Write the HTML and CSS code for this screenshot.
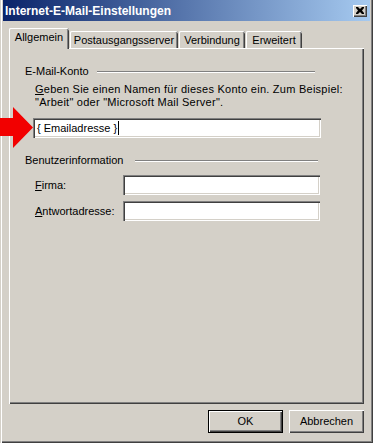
FILE: index.html
```html
<!DOCTYPE html>
<html lang="de">
<head>
<meta charset="utf-8">
<title>Internet-E-Mail-Einstellungen</title>
<link rel="stylesheet" href="styles.css">
</head>
<body>
<div class="window">
  <div class="titlebar">
    <span class="title">Internet-E-Mail-Einstellungen</span>
    <span class="close"><svg width="8" height="7" viewBox="0 0 8 7"><path d="M0 0h2l2 2 2-2h2v1L6 3.5 8 6v1H6L4 5 2 7H0V6l2-2.5L0 1z" fill="#000"/></svg></span>
  </div>
  <div class="tabs">
    <div class="tab tab-active">Allgemein</div>
    <div class="tab tab-out">Postausgangsserver</div>
    <div class="tab tab-conn">Verbindung</div>
    <div class="tab tab-adv">Erweitert</div>
  </div>
  <div class="panel">
    <div class="group-head group-head-mail"><span>E-Mail-Konto</span><span class="rule"></span></div>
    <p class="desc"><u>G</u>eben Sie einen Namen für dieses Konto ein. Zum Beispiel:<br>"Arbeit" oder "Microsoft Mail Server".</p>
    <div class="field field-wide">{ Emailadresse }<span class="caret"></span></div>
    <div class="group-head group-head-user"><span>Benutzerinformation</span><span class="rule rule-wide"></span></div>
    <div class="row row-first"><label class="row-label"><u>F</u>irma:</label><div class="field field-row"></div></div>
    <div class="row row-second"><label class="row-label"><u>A</u>ntwortadresse:</label><div class="field field-row"></div></div>
  </div>
  <div class="buttons">
    <div class="btn btn-default">OK</div>
    <div class="btn">Abbrechen</div>
  </div>
  <svg class="arrow" width="34" height="42" viewBox="0 0 34 42"><polygon points="0,11 13,11 13,0 33,20.5 13,41 13,29 0,29" fill="#f20000"/></svg>
</div>
</body>
</html>
```
FILE: styles.css
```css
* { box-sizing: border-box; }
body {
  margin: 0;
  background: #d4d0c8;
  font-family: "Liberation Sans", Arial, sans-serif;
  font-size: 11px;
  color: #000;
}
.window {
  position: relative;
  width: 373px;
  height: 443px;
  background: #d4d0c8;
  padding: 0 3px 3px 3px;
  box-shadow: inset 1px 0 #d4d0c8, inset 2px 0 #fff, inset -1px -1px #404040, inset -2px -2px #808080;
}
.titlebar {
  height: 21px;
  display: flex;
  align-items: center;
  padding-left: 2px;
  background: linear-gradient(to right, #0a246a, #a6caf0);
}
.title {
  color: #fff;
  font-weight: bold;
  font-size: 12px;
}
.close {
  margin-left: auto;
  margin-right: 3px;
  width: 14px;
  height: 12px;
  background: #d4d0c8;
  display: flex;
  align-items: center;
  justify-content: center;
  box-shadow: inset 1px 1px #fff, inset -1px -1px #404040, inset -2px -2px #808080;
}
.close svg { display: block; }
.tabs {
  display: flex;
  align-items: flex-end;
  margin-top: 7px;
  padding-left: 6px;
  height: 20px;
}
.tab {
  height: 17px;
  line-height: 16px;
  text-align: center;
  margin-left: 1px;
  padding-top: 1px;
  border-radius: 2px 2px 0 0;
  box-shadow: inset 1px 0 #fff, inset 0 1px #fff, inset -1px 0 #404040, inset -2px 0 #808080;
}
.tab-active {
  position: relative;
  z-index: 1;
  margin-left: 0;
  width: 60px;
  height: 21px;
  margin-bottom: -1px;
  padding-top: 0;
  line-height: 19px;
  background: #d4d0c8;
}
.tab-out { width: 108px; margin-left: 1px; }
.tab-conn { width: 66px; }
.tab-adv { width: 56px; }
.panel {
  margin: 0 6px;
  height: 356px;
  padding: 17px 0 0 16px;
  box-shadow: inset 1px 1px #fff, inset -1px -1px #404040, inset -2px -2px #808080;
}
.group-head {
  display: flex;
  align-items: center;
  height: 13px;
  line-height: 13px;
}
.group-head-mail { width: 290px; }
.group-head-user { width: 293px; margin-top: 16px; }
.rule {
  flex: 1;
  margin-left: 8px;
  height: 2px;
  border-top: 1px solid #808080;
  border-bottom: 1px solid #fff;
}
.rule-wide { margin-left: 12px; }
.desc {
  margin: 5px 0 0 10px;
  line-height: 13px;
  letter-spacing: 0.25px;
}
.field {
  height: 20px;
  line-height: 20px;
  padding-left: 4px;
  background: #fff;
  box-shadow: inset 1px 1px #808080, inset 2px 2px #404040, inset -1px -1px #fff, inset -2px -2px #d4d0c8;
}
.field-wide {
  margin: 9px 0 0 8px;
  width: 288px;
  display: flex;
  align-items: center;
}
.caret {
  display: inline-block;
  width: 1px;
  height: 14px;
  margin-left: 1px;
  background: #000;
}
.row {
  display: flex;
  align-items: center;
}
.row-first { margin-top: 8px; }
.row-second { margin-top: 6px; }
.row-label {
  width: 98px;
  padding-left: 10px;
}
.field-row { width: 197px; }
.buttons {
  display: flex;
  justify-content: flex-end;
  gap: 6px;
  margin: 6px 6px 0 0;
}
.btn {
  width: 75px;
  height: 23px;
  line-height: 22px;
  text-align: center;
  box-shadow: inset 1px 1px #fff, inset -1px -1px #404040, inset -2px -2px #808080;
}
.btn-default {
  border: 1px solid #000;
  line-height: 20px;
}
.arrow {
  position: absolute;
  left: 0;
  top: 107px;
}
```
